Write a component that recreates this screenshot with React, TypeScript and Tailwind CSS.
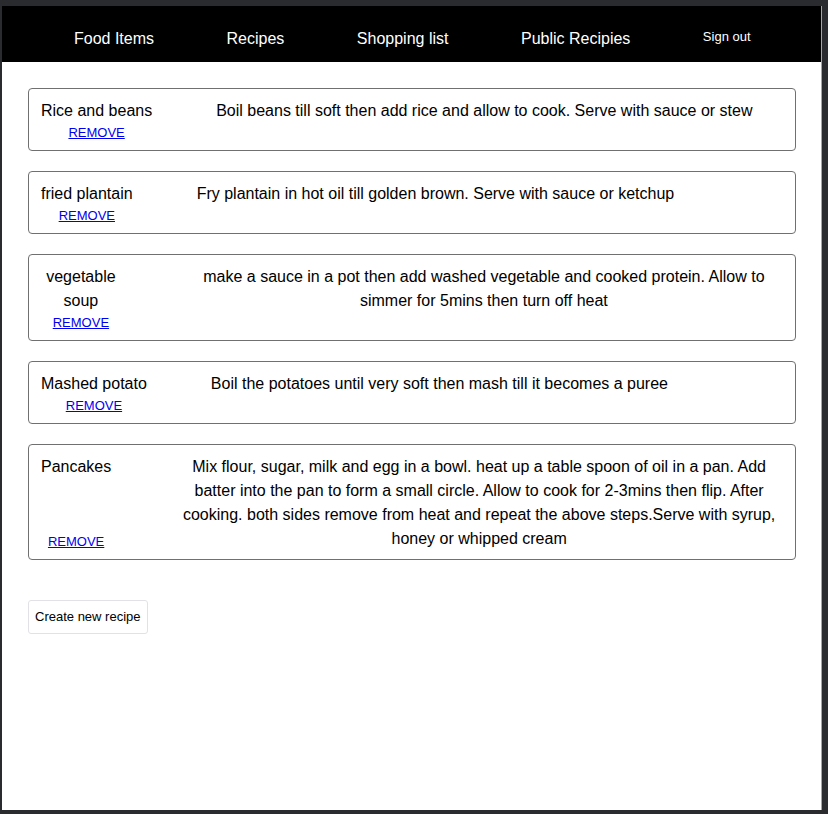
import React from 'react';

type Recipe = {
  id: number;
  name: string;
  method: string;
};

const recipes: Recipe[] = [
  {
    id: 1,
    name: 'Rice and beans',
    method: 'Boil beans till soft then add rice and allow to cook. Serve with sauce or stew',
  },
  {
    id: 2,
    name: 'fried plantain',
    method: 'Fry plantain in hot oil till golden brown. Serve with sauce or ketchup',
  },
  {
    id: 3,
    name: 'vegetable soup',
    method:
      'make a sauce in a pot then add washed vegetable and cooked protein. Allow to simmer for 5mins then turn off heat',
  },
  {
    id: 4,
    name: 'Mashed potato',
    method: 'Boil the potatoes until very soft then mash till it becomes a puree',
  },
  {
    id: 5,
    name: 'Pancakes',
    method:
      'Mix flour, sugar, milk and egg in a bowl. heat up a table spoon of oil in a pan. Add batter into the pan to form a small circle. Allow to cook for 2-3mins then flip. After cooking. both sides remove from heat and repeat the above steps.Serve with syrup, honey or whipped cream',
  },
];

const navLinks = ['Food Items', 'Recipes', 'Shopping list', 'Public Recipies'];

function RecipeCard({ recipe }: { recipe: Recipe }) {
  return (
    <div className="flex rounded-[4px] border border-[#707070] px-[12px] pt-[10px] pb-[8px]">
      <div className="flex flex-col justify-between text-center">
        <span className="text-[16px] leading-6 text-black">{recipe.name}</span>
        <a href="#" className="text-[13px] leading-[19px] text-[#0000ee] underline">
          REMOVE
        </a>
      </div>
      <p className="ml-16 text-center text-[16px] leading-6 text-black">{recipe.method}</p>
    </div>
  );
}

export default function App() {
  return (
    <div
      className="h-[814px] w-[828px] overflow-hidden bg-[#2a2b2f] pt-[6px] pl-[2px]"
      style={{ fontFamily: '"Liberation Sans", Arial, sans-serif' }}
    >
      <div className="flex h-[804px] w-[820px]">
        <main className="h-full w-[819px] bg-white">
          <nav className="flex h-[56px] items-start gap-[72.5px] bg-black pl-[72px] pt-[24px] text-white">
            {navLinks.map((link) => (
              <a key={link} href="#" className="text-[16px] leading-[18px]">
                {link}
              </a>
            ))}
            <a href="#" className="-mt-px text-[13px] leading-[15px]">
              Sign out
            </a>
          </nav>

          <div className="ml-[26px] mt-[26px] flex w-[768px] flex-col gap-5">
            {recipes.map((recipe) => (
              <RecipeCard key={recipe.id} recipe={recipe} />
            ))}
          </div>

          <button className="ml-[26px] mt-10 flex h-[34px] items-center rounded-[3px] border border-[#e2e2e6] bg-white px-[6px] text-[13px] text-black">
            Create new recipe
          </button>
        </main>
        <div className="h-full w-px bg-[#a4a5a8]" />
      </div>
    </div>
  );
}
